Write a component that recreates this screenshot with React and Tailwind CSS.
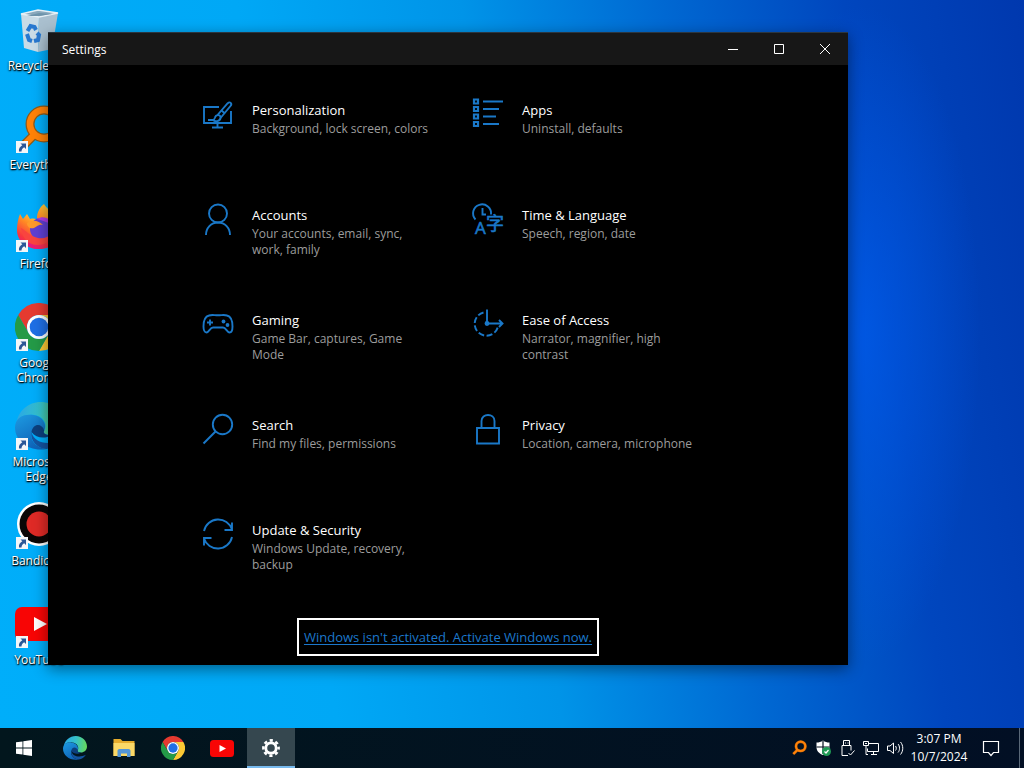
import React from 'react';

// Logos shared by the desktop and the taskbar
const EdgeLogo = ({ className }) => (
  <svg viewBox="0 0 32 32" className={className} aria-hidden="true">
    <defs>
      <linearGradient id="edgeTop" x1="0" y1="0.4" x2="1" y2="0.5">
        <stop offset="0" stopColor="#2aa7e6" />
        <stop offset="0.5" stopColor="#35c1c9" />
        <stop offset="1" stopColor="#66d85a" />
      </linearGradient>
      <linearGradient id="edgeBody" x1="0" y1="0" x2="0.5" y2="1">
        <stop offset="0" stopColor="#1d9be2" />
        <stop offset="1" stopColor="#0f64b8" />
      </linearGradient>
    </defs>
    <path d="M1 14C2 6 9 0 17 0c9 0 15 7 15 14 0 5-4 8-8 8s-5.500-1.500-4.500-3C22 15 19 9 12 8.500 6 8 2.500 10 1 14z" fill="url(#edgeTop)" />
    <path d="M0 17C0 11 5 8 11 8.500c7 .5 10.500 6 8.500 10.500-1-3-7.500-3-8.500 2-1 5 4 10 10 10.300C10 33.500 0 26.500 0 17z" fill="url(#edgeBody)" />
    <path d="M11 20c2 8 12 9 19.500 5-2 3.500-5.500 5.700-9.500 6.300-6-.3-11-5.300-10-11.300z" fill="#1453a0" />
    <path d="M11 20c1-6 7-6 8.500-1-1 1.700.5 3 4.500 3-4 3-10 2-13-2z" fill="#0c3f7d" />
  </svg>
);

const ChromeLogo = ({ className }) => (
  <svg viewBox="0 0 48 48" className={className} aria-hidden="true">
    <path d="M3.200 12A24 24 0 0 1 44.800 12H24A12 12 0 0 0 13.600 30z" fill="#e53a30" />
    <path d="M44.800 12A24 24 0 0 1 24 48L34.400 30A12 12 0 0 0 24 12z" fill="#fcc934" />
    <path d="M24 48A24 24 0 0 1 3.200 12L13.600 30A12 12 0 0 0 34.400 30z" fill="#249a47" />
    <circle cx="24" cy="24" r="12" fill="#fff" />
    <circle cx="24" cy="24" r="9.300" fill="#1f6fe5" />
  </svg>
);

const YouTubeLogo = ({ className }) => (
  <svg viewBox="0 0 48 34" className={className} aria-hidden="true">
    <rect width="48" height="34" rx="7" fill="#f80505" />
    <path d="M19 10l13 7-13 7z" fill="#fff" />
  </svg>
);

const MagnifierLogo = ({ className, edge }) => (
  <svg viewBox="0 0 48 48" className={className} fill="none" aria-hidden="true">
    <path d="M20 29L7 42" stroke={edge} strokeWidth="9" />
    <circle cx="29" cy="19" r="14" stroke={edge} strokeWidth="9" />
    <path d="M20 29L7 42" stroke="#ff8208" strokeWidth="6.500" />
    <circle cx="29" cy="19" r="14" stroke="#ff8208" strokeWidth="6.500" />
  </svg>
);

const RecycleBin = () => (
  <svg viewBox="0 0 48 48" className="w-12 h-12" aria-hidden="true">
    <path d="M6 8l18 3-1 35-14-4z" fill="#c9dbe6" />
    <path d="M24 11l19-4-6 36-14 3z" fill="#a9bfce" />
    <path d="M6 8l17-4 20 3-19 4z" fill="#8aa9bd" stroke="#e5eff5" strokeWidth="1.500" />
    <path d="M12 10l12-3 13 1-13 2z" fill="#6e93aa" />
    <g fill="none" stroke="#2878cf" strokeWidth="4">
      <path d="M12.500 25l3-5 4 1 1.500 3" />
      <path d="M12 28l2 6 3 1" />
      <path d="M19 35l4-1 1-5-2-2" />
    </g>
  </svg>
);

const FirefoxLogo = () => (
  <svg viewBox="0 0 48 48" className="w-12 h-12" aria-hidden="true">
    <defs>
      <linearGradient id="foxBody" x1="0.800" y1="0" x2="0.200" y2="1">
        <stop offset="0" stopColor="#ffe23e" />
        <stop offset="0.400" stopColor="#ff8a24" />
        <stop offset="0.750" stopColor="#f8353f" />
        <stop offset="1" stopColor="#e31587" />
      </linearGradient>
    </defs>
    <path d="M5 10l3 5 4-5 3 5c4-1 7 0 9 2l8 12-8 16C11 45 2 37 2 26c0-6 1-11 3-16z" fill="url(#foxBody)" />
    <path d="M29 0c3 5 6 6 9 10 5 5 8 9 8 16 0 12-10 19-22 19-5 0-10-2-14-6l16-12-4-13c0-6 3-11 7-14z" fill="url(#foxBody)" />
    <circle cx="26" cy="25" r="11" fill="#5f3fd2" />
    <path d="M12 19c6-4 12-2 16 2-5-1-6 2-9 3-4 1-7-1-7-5z" fill="#ff9a2a" />
    <path d="M22 15c6-4 14-1 15 6-4-3-9-4-15-6z" fill="#b23be6" />
    <path d="M6 24c5 2 8 8 17 10 6 1 11-1 14-5-1 8-7 12-14 12C13 41 7 34 6 24z" fill="#f9443f" />
  </svg>
);

const BandicamLogo = () => (
  <svg viewBox="0 0 48 48" className="w-12 h-12" aria-hidden="true">
    <circle cx="24" cy="23" r="22" fill="#fff" />
    <circle cx="24" cy="23" r="19.500" fill="#0a0606" />
    <circle cx="24" cy="23" r="12.500" fill="#df2a26" />
  </svg>
);

const ShortcutArrow = () => (
  <svg viewBox="0 0 12 12" className="absolute left-px bottom-0 w-3 h-3" aria-hidden="true">
    <rect width="12" height="12" fill="#f4f6f8" />
    <path d="M4.500 2.500H10V8L8.200 6.200C6.500 7 5.500 8.500 5.500 10.500H3C2.500 8 4 5.500 6.300 4.300z" fill="#2b5797" />
  </svg>
);

const desktopItems = [
  { label: 'Recycle Bin', icon: <RecycleBin /> },
  { label: 'Everything', icon: <MagnifierLogo className="w-12 h-12" edge="#8a5a1c" />, shortcut: true },
  { label: 'Firefox', icon: <FirefoxLogo />, shortcut: true },
  { label: 'Google Chrome', icon: <ChromeLogo className="w-12 h-12" />, shortcut: true },
  { label: 'Microsoft Edge', icon: <EdgeLogo className="w-12 h-12" />, shortcut: true },
  { label: 'Bandicam', icon: <BandicamLogo />, shortcut: true },
  { label: 'YouTube', icon: <YouTubeLogo className="w-12" />, shortcut: true },
];

// Line icons of the settings categories, all on a 32px grid
const LineIcon = ({ children }) => (
  <svg viewBox="0 0 32 32" className="w-8 h-8 shrink-0 overflow-visible text-[#1a78c8]" fill="none" stroke="currentColor" strokeWidth="1.900" aria-hidden="true">
    {children}
  </svg>
);

const categories = [
  {
    title: 'Personalization',
    text: 'Background, lock screen, colors',
    icon: (
      <>
        <path d="M17 9H2v16h27V13" />
        <path d="M15.500 25v4M10 29.500h11" />
        <path d="M15.500 17L25.500 5.500c2.500-2.500 5 0 3 2.500L18.500 20" />
        <path d="M6 22h5c1 0 1.500-1 2-2.500 1-3.500 6-3 5.500.5-.5 3.500-5.500 4-7.500 2" />
        <path d="M19.500 12.500l3.500 3" />
      </>
    ),
  },
  {
    title: 'Apps',
    text: 'Uninstall, defaults',
    icon: (
      <g strokeWidth="2.200">
        <path d="M2 1.500h4v4H2zM2 9h4v4H2zM2 16.500h4v4H2zM2 24h4v4H2z" />
        <path d="M11 3.500h20M11 11h16M11 18.500h13M11 26h16" />
      </g>
    ),
  },
  {
    title: 'Accounts',
    text: 'Your accounts, email, sync,\nwork, family',
    icon: (
      <>
        <circle cx="16" cy="10.500" r="9" />
        <path d="M4 32c0-7 5-12.500 12-12.500S28 25 28 32" />
      </>
    ),
  },
  {
    title: 'Time & Language',
    text: 'Speech, region, date',
    icon: (
      <>
        <path d="M3.500 16.500A9 9 0 1 1 19 11.500" />
        <path d="M10.500 5v6.500H14" />
        <g fill="currentColor" strokeWidth="0.600">
          <text x="3" y="31" fontSize="17" fontFamily="Open Sans, sans-serif">A</text>
          <text x="14" y="27" fontSize="18" fontFamily="Noto Sans CJK SC, sans-serif">字</text>
        </g>
      </>
    ),
  },
  {
    title: 'Gaming',
    text: 'Game Bar, captures, Game\nMode',
    icon: (
      <>
        <path d="M7 7.500c3-1 5-.2 9-.2s6-.8 9 .2c4 1 5.500 6 5.500 11 0 3-1 6-3 6-2.500 0-3.500-5-6.500-5H11c-3 0-4 5-6.500 5-2 0-3-3-3-6C1.500 13.500 3 8.500 7 7.500z" />
        <path d="M5 14.500h6M8 11.500v6" />
        <g fill="currentColor" stroke="none">
          <circle cx="21.500" cy="13.500" r="1.900" />
          <circle cx="25.500" cy="17" r="1.900" />
        </g>
      </>
    ),
  },
  {
    title: 'Ease of Access',
    text: 'Narrator, magnifier, high\ncontrast',
    icon: (
      <>
        <path d="M11.500 4.500A11.800 11.800 0 1 0 26 18.500" strokeDasharray="6 2.500" />
        <path d="M15 1.500v14h15.500M27 12l3.500 3.500-3.500 3.500" />
        <circle cx="15" cy="15.500" r="1.500" fill="currentColor" />
      </>
    ),
  },
  {
    title: 'Search',
    text: 'Find my files, permissions',
    icon: (
      <>
        <circle cx="20.500" cy="11.500" r="9.700" />
        <path d="M13.500 18.500L1.500 30.500" />
      </>
    ),
  },
  {
    title: 'Privacy',
    text: 'Location, camera, microphone',
    icon: (
      <>
        <path d="M5 15h22v15.500H5z" />
        <path d="M9.500 15V8c0-8 13-8 13 0v7" />
      </>
    ),
  },
  {
    title: 'Update & Security',
    text: 'Windows Update, recovery,\nbackup',
    icon: (
      <>
        <path d="M2 13A14.500 14.500 0 0 1 30 11.500M30 4.500v7.500h-7.500" />
        <path d="M30 19A14.500 14.500 0 0 1 2 20.500M2 27.500V20h7.500" />
      </>
    ),
  },
];

const pinned = [
  { label: 'Microsoft Edge', icon: <EdgeLogo className="w-6 h-6" /> },
  {
    label: 'File Explorer',
    icon: (
      <svg viewBox="0 0 24 24" className="w-6 h-6" aria-hidden="true">
        <path d="M1.500 3h7l2 2h12v15h-21z" fill="#e6ac2c" />
        <path d="M1.500 7h21v13h-21z" fill="#fbd967" />
        <path d="M5.500 21v-6c0-1 .5-2 2-2h9c1.500 0 2 1 2 2v6h-3.500v-3.500H9V21z" fill="#5396d6" />
      </svg>
    ),
  },
  { label: 'Google Chrome', icon: <ChromeLogo className="w-6 h-6" /> },
  { label: 'YouTube', icon: <YouTubeLogo className="w-6" /> },
];

const tray = [
  { label: 'Everything', icon: <MagnifierLogo className="w-4 h-4" edge="#8a4a10" /> },
  {
    label: 'Windows Security',
    icon: (
      <svg viewBox="0 0 16 16" className="w-4 h-4" aria-hidden="true">
        <path d="M8 0.500c2 1.500 4 2 6.500 2V7c0 4-2.500 6.500-6.500 8C4 13.500 1.500 11 1.500 7V2.500C4 2.500 6 2 8 .5z" fill="#fff" />
        <path d="M8 1v13M1.500 7h13" stroke="#04101f" strokeWidth="1.200" />
        <circle cx="11.500" cy="11.500" r="4.500" fill="#1f9a55" />
        <path d="M9.500 11.500l1.500 1.500 2.500-3" stroke="#fff" fill="none" strokeWidth="1.200" />
      </svg>
    ),
  },
  {
    label: 'Safely remove hardware',
    icon: (
      <svg viewBox="0 0 16 16" className="w-4 h-4" fill="none" stroke="#fff" aria-hidden="true">
        <path d="M4.500 5.500v-5h6v5M3 5.500h9v5M3 5.500v10h6M6 3h1M8.500 3h1" />
        <path d="M9.500 13l2 2 4-4.500" />
      </svg>
    ),
  },
  {
    label: 'Network',
    icon: (
      <svg viewBox="0 0 18 16" className="w-[18px] h-4" fill="none" stroke="#fff" aria-hidden="true">
        <path d="M6.500 3.500h10v8h-11v-3M9 14.500h6M11.500 11.500v3" />
        <path d="M1.500 1.500h5v4h-5zM4 5.500v9h2M3 3.500h2" />
      </svg>
    ),
  },
  {
    label: 'Volume',
    icon: (
      <svg viewBox="0 0 18 16" className="w-[18px] h-4" fill="none" stroke="#fff" aria-hidden="true">
        <path d="M1.500 6v4.500H4l3.500 3v-10.500L4 6z" />
        <path d="M9.500 6c1 1 1 3.500 0 4.500M12 4c2 2 2 6.500 0 8.500M14.500 2c3 3.500 3 9 0 12.500" />
      </svg>
    ),
  },
];

const DesktopIcon = ({ label, icon, shortcut }) => (
  <button className="w-[74px] h-[99px] flex flex-col items-center gap-1">
    <span className="relative w-12 h-12 flex items-center justify-center">
      {icon}
      {shortcut && <ShortcutArrow />}
    </span>
    <span className="text-xs leading-[15px] text-white text-center [text-shadow:0_1px_2px_#000,1px_1px_1px_#000]">{label}</span>
  </button>
);

const Category = ({ title, text, icon }) => (
  <a href="#" className="flex items-start gap-[18px] pl-6">
    <LineIcon>{icon}</LineIcon>
    <span className="flex flex-col gap-px pt-[2px]">
      <span className="text-[13px] leading-5 text-white">{title}</span>
      <span className="text-xs leading-4 text-[#9c9c9c] whitespace-pre">{text}</span>
    </span>
  </a>
);

const SettingsWindow = () => (
  <section className="absolute left-12 top-8 w-[800px] bg-black border-t border-[#2c3640] shadow-[0_4px_14px_rgba(0,0,0,0.45)]">
    <header className="flex items-center h-8 bg-[#171717] text-white">
      <h1 className="flex-1 pl-[14px] pt-[2px] text-xs">Settings</h1>
      <button aria-label="Minimize" className="w-[46px] h-8 flex items-center justify-center">
        <svg viewBox="0 0 10 10" className="w-[10px] h-[10px]" stroke="#fff" aria-hidden="true"><path d="M0 5.500h10" /></svg>
      </button>
      <button aria-label="Maximize" className="w-[46px] h-8 flex items-center justify-center">
        <svg viewBox="0 0 10 10" className="w-[10px] h-[10px]" stroke="#fff" fill="none" aria-hidden="true"><path d="M.5.5h9v9h-9z" /></svg>
      </button>
      <button aria-label="Close" className="w-[46px] h-8 flex items-center justify-center">
        <svg viewBox="0 0 10 10" className="w-[10px] h-[10px]" stroke="#fff" aria-hidden="true"><path d="M0 0l10 10M10 0L0 10" /></svg>
      </button>
    </header>
    <div className="flex flex-col items-center pt-[33px] pb-[9px]">
      <nav className="grid grid-cols-[270px_270px] auto-rows-[54px] gap-y-[51px]">
        {categories.map((c) => (
          <Category key={c.title} {...c} />
        ))}
      </nav>
      <a href="#" className="mt-[46px] h-[38px] px-[5px] pt-px flex items-center border-2 border-white text-[13px] text-[#1c78cc] underline underline-offset-2">
        Windows isn't activated. Activate Windows now.
      </a>
    </div>
  </section>
);

const Taskbar = () => (
  <footer className="flex h-10 bg-linear-to-r from-[#02161d] to-[#020f24] text-white">
    <button aria-label="Start" className="w-12 mr-[3px] flex items-center justify-center">
      <svg viewBox="0 0 16 16" className="w-4 h-4" fill="#fff" aria-hidden="true">
        <path d="M0 2.300l6.500-.9v6.200H0zM7.300 1.300L16 0v7.600H7.300zM0 8.400h6.500v6.200L0 13.700zM7.300 8.400H16V16l-8.700-1.300z" />
      </svg>
    </button>
    <div className="flex gap-px flex-1">
      {pinned.map((p) => (
        <button key={p.label} aria-label={p.label} className="w-12 flex items-center justify-center">{p.icon}</button>
      ))}
      <button aria-label="Settings" className="w-12 flex items-center justify-center bg-[#35474f] border-b-2 border-[#76b9ed]">
        <svg viewBox="0 0 20 20" className="w-5 h-5 mt-[2px]" fill="none" stroke="#fff" aria-hidden="true">
          <circle cx="10" cy="10" r="5.200" strokeWidth="2.800" />
          <circle cx="10" cy="10" r="7.600" strokeWidth="2.600" strokeDasharray="3.200 2.769" strokeDashoffset="1.600" />
        </svg>
      </button>
    </div>
    <div className="flex mr-1">
      {tray.map((t) => (
        <button key={t.label} aria-label={t.label} className="w-6 flex items-center justify-center">{t.icon}</button>
      ))}
    </div>
    <button className="w-14 flex flex-col items-center justify-center text-xs leading-[18px] whitespace-nowrap">
      <span>3:07 PM</span>
      <span>10/7/2024</span>
    </button>
    <button aria-label="Notifications" className="w-12 mr-1 flex items-center justify-center">
      <svg viewBox="0 0 18 18" className="w-[18px] h-[18px]" fill="none" stroke="#fff" strokeWidth="1.200" aria-hidden="true">
        <path d="M1.500 2.500h15v11h-5l-2.500 3-2.500-3h-5z" />
      </svg>
    </button>
    <button aria-label="Show desktop" className="w-[5px] border-l border-[#5a6878]" />
  </footer>
);

const App = () => (
  <div className="h-screen flex flex-col overflow-hidden font-['Open_Sans',sans-serif] bg-[#0078e0]">
    <main className="relative flex-1 min-h-0 bg-[radial-gradient(ellipse_120px_330px_at_84%_46%,rgba(0,92,240,0.7),transparent),linear-gradient(82deg,#00aefa_0%,#00a8f6_30%,#0094e8_50%,#0068d2_68%,#0046be_84%,#0038ae_100%)]">
      <div className="flex flex-col w-[74px] ml-[2px] pt-[6px]">
        {desktopItems.map((d) => (
          <DesktopIcon key={d.label} {...d} />
        ))}
      </div>
      <SettingsWindow />
    </main>
    <Taskbar />
  </div>
);

export default App;
